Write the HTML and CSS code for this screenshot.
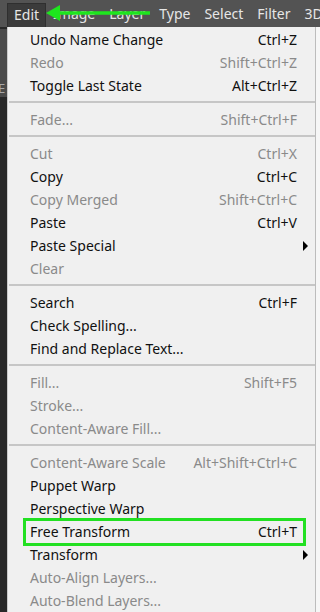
FILE: index.html
```html
<!DOCTYPE html>
<html lang="en">
<head>
  <meta charset="UTF-8">
  <meta name="viewport" content="width=device-width, initial-scale=1.0">
  <title>Edit Menu</title>
  <link rel="stylesheet" href="styles.css">
</head>
<body>
  <!-- Menu bar -->
  <header class="menubar">
    <span class="menubar-item open">Edit</span>
    <span class="menubar-item">Image</span>
    <span class="menubar-item">Layer</span>
    <span class="menubar-item">Type</span>
    <span class="menubar-item">Select</span>
    <span class="menubar-item">Filter</span>
    <span class="menubar-item">3D</span>

    <!-- Annotation arrow -->
    <svg class="pointer" width="106" height="20" viewBox="0 0 106 20">
      <line x1="10" y1="10" x2="104" y2="10" stroke="#1ee61e" stroke-width="3.5"/>
      <polygon points="0,10 14,2 14,18" fill="#1ee61e"/>
    </svg>
  </header>

  <div class="workspace">
    <div class="side-strip">
      <div class="side-panel">E</div>
    </div>

    <ul class="dropdown">
      <li class="item"><span>Undo Name Change</span><span class="key">Ctrl+Z</span></li>
      <li class="item disabled"><span>Redo</span><span class="key">Shift+Ctrl+Z</span></li>
      <li class="item"><span>Toggle Last State</span><span class="key">Alt+Ctrl+Z</span></li>
      <li class="sep"></li>
      <li class="item disabled"><span>Fade...</span><span class="key">Shift+Ctrl+F</span></li>
      <li class="sep"></li>
      <li class="item disabled"><span>Cut</span><span class="key">Ctrl+X</span></li>
      <li class="item"><span>Copy</span><span class="key">Ctrl+C</span></li>
      <li class="item disabled"><span>Copy Merged</span><span class="key">Shift+Ctrl+C</span></li>
      <li class="item"><span>Paste</span><span class="key">Ctrl+V</span></li>
      <li class="item submenu"><span>Paste Special</span></li>
      <li class="item disabled"><span>Clear</span></li>
      <li class="sep"></li>
      <li class="item"><span>Search</span><span class="key">Ctrl+F</span></li>
      <li class="item"><span>Check Spelling...</span></li>
      <li class="item"><span>Find and Replace Text...</span></li>
      <li class="sep"></li>
      <li class="item disabled"><span>Fill...</span><span class="key">Shift+F5</span></li>
      <li class="item disabled"><span>Stroke...</span></li>
      <li class="item disabled"><span>Content-Aware Fill...</span></li>
      <li class="sep"></li>
      <li class="item disabled"><span>Content-Aware Scale</span><span class="key">Alt+Shift+Ctrl+C</span></li>
      <li class="item"><span>Puppet Warp</span></li>
      <li class="item"><span>Perspective Warp</span></li>
      <li class="item marked"><span>Free Transform</span><span class="key">Ctrl+T</span></li>
      <li class="item submenu"><span>Transform</span></li>
      <li class="item disabled"><span>Auto-Align Layers...</span></li>
      <li class="item disabled"><span>Auto-Blend Layers...</span></li>
    </ul>

    <div class="edge-strip"></div>
  </div>
</body>
</html>
```

FILE: styles.css
```css
* {
  margin: 0;
  padding: 0;
  box-sizing: border-box;
}

body {
  width: 320px;
  height: 612px;
  overflow: hidden;
  font-family: "Noto Sans", "Open Sans", sans-serif;
  font-size: 14px;
  background: #2a2a2a;
}

/* Menu bar */
.menubar {
  position: relative;
  height: 27px;
  background: #535353;
  display: flex;
  align-items: flex-end;
  padding-left: 7px;
  color: #e6e6e6;
  white-space: nowrap;
  overflow: hidden;
}

.menubar-item {
  height: 24px;
  line-height: 22px;
  padding: 0 7px;
}

.menubar-item.open {
  background: #3b3b3b;
  border: 1px solid #2f2f2f;
  border-bottom: none;
  padding: 0 6px;
}

.pointer {
  position: absolute;
  left: 46px;
  top: 3px;
}

/* Workspace */
.workspace {
  display: flex;
  height: 585px;
}

.side-strip {
  width: 7px;
  background: #282828;
}

.side-panel {
  margin-top: 2px;
  height: 68px;
  background: #4a4a4a;
  color: #a8a8a8;
  font-size: 13px;
  line-height: 18px;
  padding-top: 50px;
  text-indent: -2px;
  overflow: hidden;
}

/* Dropdown */
.dropdown {
  list-style: none;
  width: 309px;
  background: #f0f0f0;
  border-left: 1px solid #c9c9c9;
  border-right: 1px solid #bcbcbc;
  padding-top: 1px;
}

.item {
  position: relative;
  height: 23px;
  display: flex;
  align-items: center;
  justify-content: space-between;
  padding: 0 18px 0 22px;
  color: #111;
}

.item.disabled {
  color: #8a8a8a;
}

.key {
  text-align: right;
}

.item.submenu::after {
  content: "";
  position: absolute;
  right: 7px;
  top: 7px;
  border-left: 5px solid #000;
  border-top: 5px solid transparent;
  border-bottom: 5px solid transparent;
}

.item.marked::before {
  content: "";
  position: absolute;
  left: 15px;
  right: 9px;
  top: -2px;
  bottom: -3px;
  border: 3px solid #22e022;
}

.sep {
  height: 11px;
  padding-top: 4px;
  margin-left: 1px;
}

.sep::before {
  content: "";
  display: block;
  height: 2px;
  background: #c6c6c6;
}

.edge-strip {
  width: 4px;
  background: #f6f6f6;
}
```
